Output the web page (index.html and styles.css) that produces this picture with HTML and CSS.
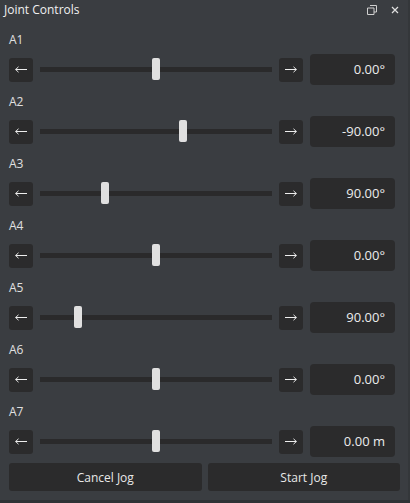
FILE: index.html
```html
<!DOCTYPE html>
<html>
<head>
<meta charset="utf-8">
<link rel="stylesheet" href="styles.css">
</head>
<body>
<div class="window">
  <div class="titlebar">
    <span class="title">Joint Controls</span>
    <div class="tb-icons">
      <svg class="tb-icon" width="10" height="10" viewBox="0 0 10 10"><path d="M3 .5h6.5v6.5H7M.5 3h6.5v6.5H.5z" fill="none" stroke="#cfcfcf" stroke-width="1"/></svg>
      <svg class="tb-icon" width="8" height="8" viewBox="0 0 8 8"><path d="M1 1l6 6M7 1L1 7" stroke="#e0e0e0" stroke-width="1.2"/></svg>
    </div>
  </div>
  <div class="content">
    <div class="joint">
      <div class="label">A1</div>
      <div class="controls">
        <button class="jog"><svg width="12" height="7" viewBox="0 0 12 7"><path d="M0.5 3.5H12M3.5 0.8L0.7 3.5 3.5 6.2" fill="none" stroke="#eee" stroke-width="1"/></svg></button>
        <div class="track"><div class="thumb" style="left:112px"></div></div>
        <button class="jog"><svg width="12" height="7" viewBox="0 0 12 7"><path d="M0 3.5H11.5M8.5 0.8L11.3 3.5 8.5 6.2" fill="none" stroke="#eee" stroke-width="1"/></svg></button>
        <div class="value">0.00°</div>
      </div>
    </div>
    <div class="joint">
      <div class="label">A2</div>
      <div class="controls">
        <button class="jog"><svg width="12" height="7" viewBox="0 0 12 7"><path d="M0.5 3.5H12M3.5 0.8L0.7 3.5 3.5 6.2" fill="none" stroke="#eee" stroke-width="1"/></svg></button>
        <div class="track"><div class="thumb" style="left:139px"></div></div>
        <button class="jog"><svg width="12" height="7" viewBox="0 0 12 7"><path d="M0 3.5H11.5M8.5 0.8L11.3 3.5 8.5 6.2" fill="none" stroke="#eee" stroke-width="1"/></svg></button>
        <div class="value">-90.00°</div>
      </div>
    </div>
    <div class="joint">
      <div class="label">A3</div>
      <div class="controls">
        <button class="jog"><svg width="12" height="7" viewBox="0 0 12 7"><path d="M0.5 3.5H12M3.5 0.8L0.7 3.5 3.5 6.2" fill="none" stroke="#eee" stroke-width="1"/></svg></button>
        <div class="track"><div class="thumb" style="left:61px"></div></div>
        <button class="jog"><svg width="12" height="7" viewBox="0 0 12 7"><path d="M0 3.5H11.5M8.5 0.8L11.3 3.5 8.5 6.2" fill="none" stroke="#eee" stroke-width="1"/></svg></button>
        <div class="value">90.00°</div>
      </div>
    </div>
    <div class="joint">
      <div class="label">A4</div>
      <div class="controls">
        <button class="jog"><svg width="12" height="7" viewBox="0 0 12 7"><path d="M0.5 3.5H12M3.5 0.8L0.7 3.5 3.5 6.2" fill="none" stroke="#eee" stroke-width="1"/></svg></button>
        <div class="track"><div class="thumb" style="left:112px"></div></div>
        <button class="jog"><svg width="12" height="7" viewBox="0 0 12 7"><path d="M0 3.5H11.5M8.5 0.8L11.3 3.5 8.5 6.2" fill="none" stroke="#eee" stroke-width="1"/></svg></button>
        <div class="value">0.00°</div>
      </div>
    </div>
    <div class="joint">
      <div class="label">A5</div>
      <div class="controls">
        <button class="jog"><svg width="12" height="7" viewBox="0 0 12 7"><path d="M0.5 3.5H12M3.5 0.8L0.7 3.5 3.5 6.2" fill="none" stroke="#eee" stroke-width="1"/></svg></button>
        <div class="track"><div class="thumb" style="left:34px"></div></div>
        <button class="jog"><svg width="12" height="7" viewBox="0 0 12 7"><path d="M0 3.5H11.5M8.5 0.8L11.3 3.5 8.5 6.2" fill="none" stroke="#eee" stroke-width="1"/></svg></button>
        <div class="value">90.00°</div>
      </div>
    </div>
    <div class="joint">
      <div class="label">A6</div>
      <div class="controls">
        <button class="jog"><svg width="12" height="7" viewBox="0 0 12 7"><path d="M0.5 3.5H12M3.5 0.8L0.7 3.5 3.5 6.2" fill="none" stroke="#eee" stroke-width="1"/></svg></button>
        <div class="track"><div class="thumb" style="left:112px"></div></div>
        <button class="jog"><svg width="12" height="7" viewBox="0 0 12 7"><path d="M0 3.5H11.5M8.5 0.8L11.3 3.5 8.5 6.2" fill="none" stroke="#eee" stroke-width="1"/></svg></button>
        <div class="value">0.00°</div>
      </div>
    </div>
    <div class="joint">
      <div class="label">A7</div>
      <div class="controls">
        <button class="jog"><svg width="12" height="7" viewBox="0 0 12 7"><path d="M0.5 3.5H12M3.5 0.8L0.7 3.5 3.5 6.2" fill="none" stroke="#eee" stroke-width="1"/></svg></button>
        <div class="track"><div class="thumb" style="left:112px"></div></div>
        <button class="jog"><svg width="12" height="7" viewBox="0 0 12 7"><path d="M0 3.5H11.5M8.5 0.8L11.3 3.5 8.5 6.2" fill="none" stroke="#eee" stroke-width="1"/></svg></button>
        <div class="value">0.00 m</div>
      </div>
    </div>
    <div class="actions">
      <button class="action">Cancel Jog</button>
      <button class="action">Start Jog</button>
    </div>
  </div>
</div>
</body>
</html>
```
FILE: styles.css
```css
* { box-sizing: border-box; }
html, body {
  margin: 0;
  padding: 0;
  background: #2f3235;
}
body {
  font-family: "Open Sans", "Noto Sans", sans-serif;
  color: #e6e6e6;
  width: 410px;
  height: 503px;
  overflow: hidden;
}
.window {
  width: 410px;
  height: 500px;
  background: #3a3d41;
  border-right: 2px solid #34373a;
  display: flex;
  flex-direction: column;
}
.titlebar {
  height: 20px;
  display: flex;
  align-items: center;
  justify-content: space-between;
  padding: 0 9px 0 4px;
}
.title {
  font-size: 12px;
  color: #f0f0f0;
  line-height: 16px;
}
.tb-icons {
  display: flex;
  align-items: center;
  gap: 14px;
}
.tb-icon { display: block; }
.content {
  padding: 12px 0 0 9px;
  display: flex;
  flex-direction: column;
  gap: 9px;
}
.joint {
  display: flex;
  flex-direction: column;
  gap: 6px;
}
.label {
  font-size: 12px;
  line-height: 16px;
  color: #e0e0e0;
}
.controls {
  width: 386px;
  height: 31px;
  display: flex;
  align-items: center;
  gap: 7px;
}
.jog {
  width: 24px;
  height: 24px;
  border: none;
  border-radius: 3px;
  background: #2b2b2c;
  padding: 0;
  display: flex;
  align-items: center;
  justify-content: center;
  flex: none;
}
.jog svg { display: block; }
.track {
  flex: 1;
  height: 5px;
  background: #2a2a2b;
  position: relative;
}
.thumb {
  position: absolute;
  top: -9px;
  width: 8px;
  height: 22px;
  border-radius: 2px;
  background: #e0e0e0;
}
.value {
  width: 85px;
  height: 31px;
  flex: none;
  background: #2b2b2c;
  border-radius: 4px;
  font-size: 13px;
  line-height: 31px;
  text-align: right;
  padding-right: 10px;
  color: #ececec;
}
.actions {
  display: flex;
  gap: 6px;
  width: 391px;
  margin-top: -3px;
}
.action {
  flex: 1;
  height: 28px;
  border: none;
  border-radius: 3px;
  background: #2b2b2c;
  color: #e8e8e8;
  font-family: "Open Sans", "Noto Sans", sans-serif;
  font-size: 12px;
  padding: 0;
}
```
